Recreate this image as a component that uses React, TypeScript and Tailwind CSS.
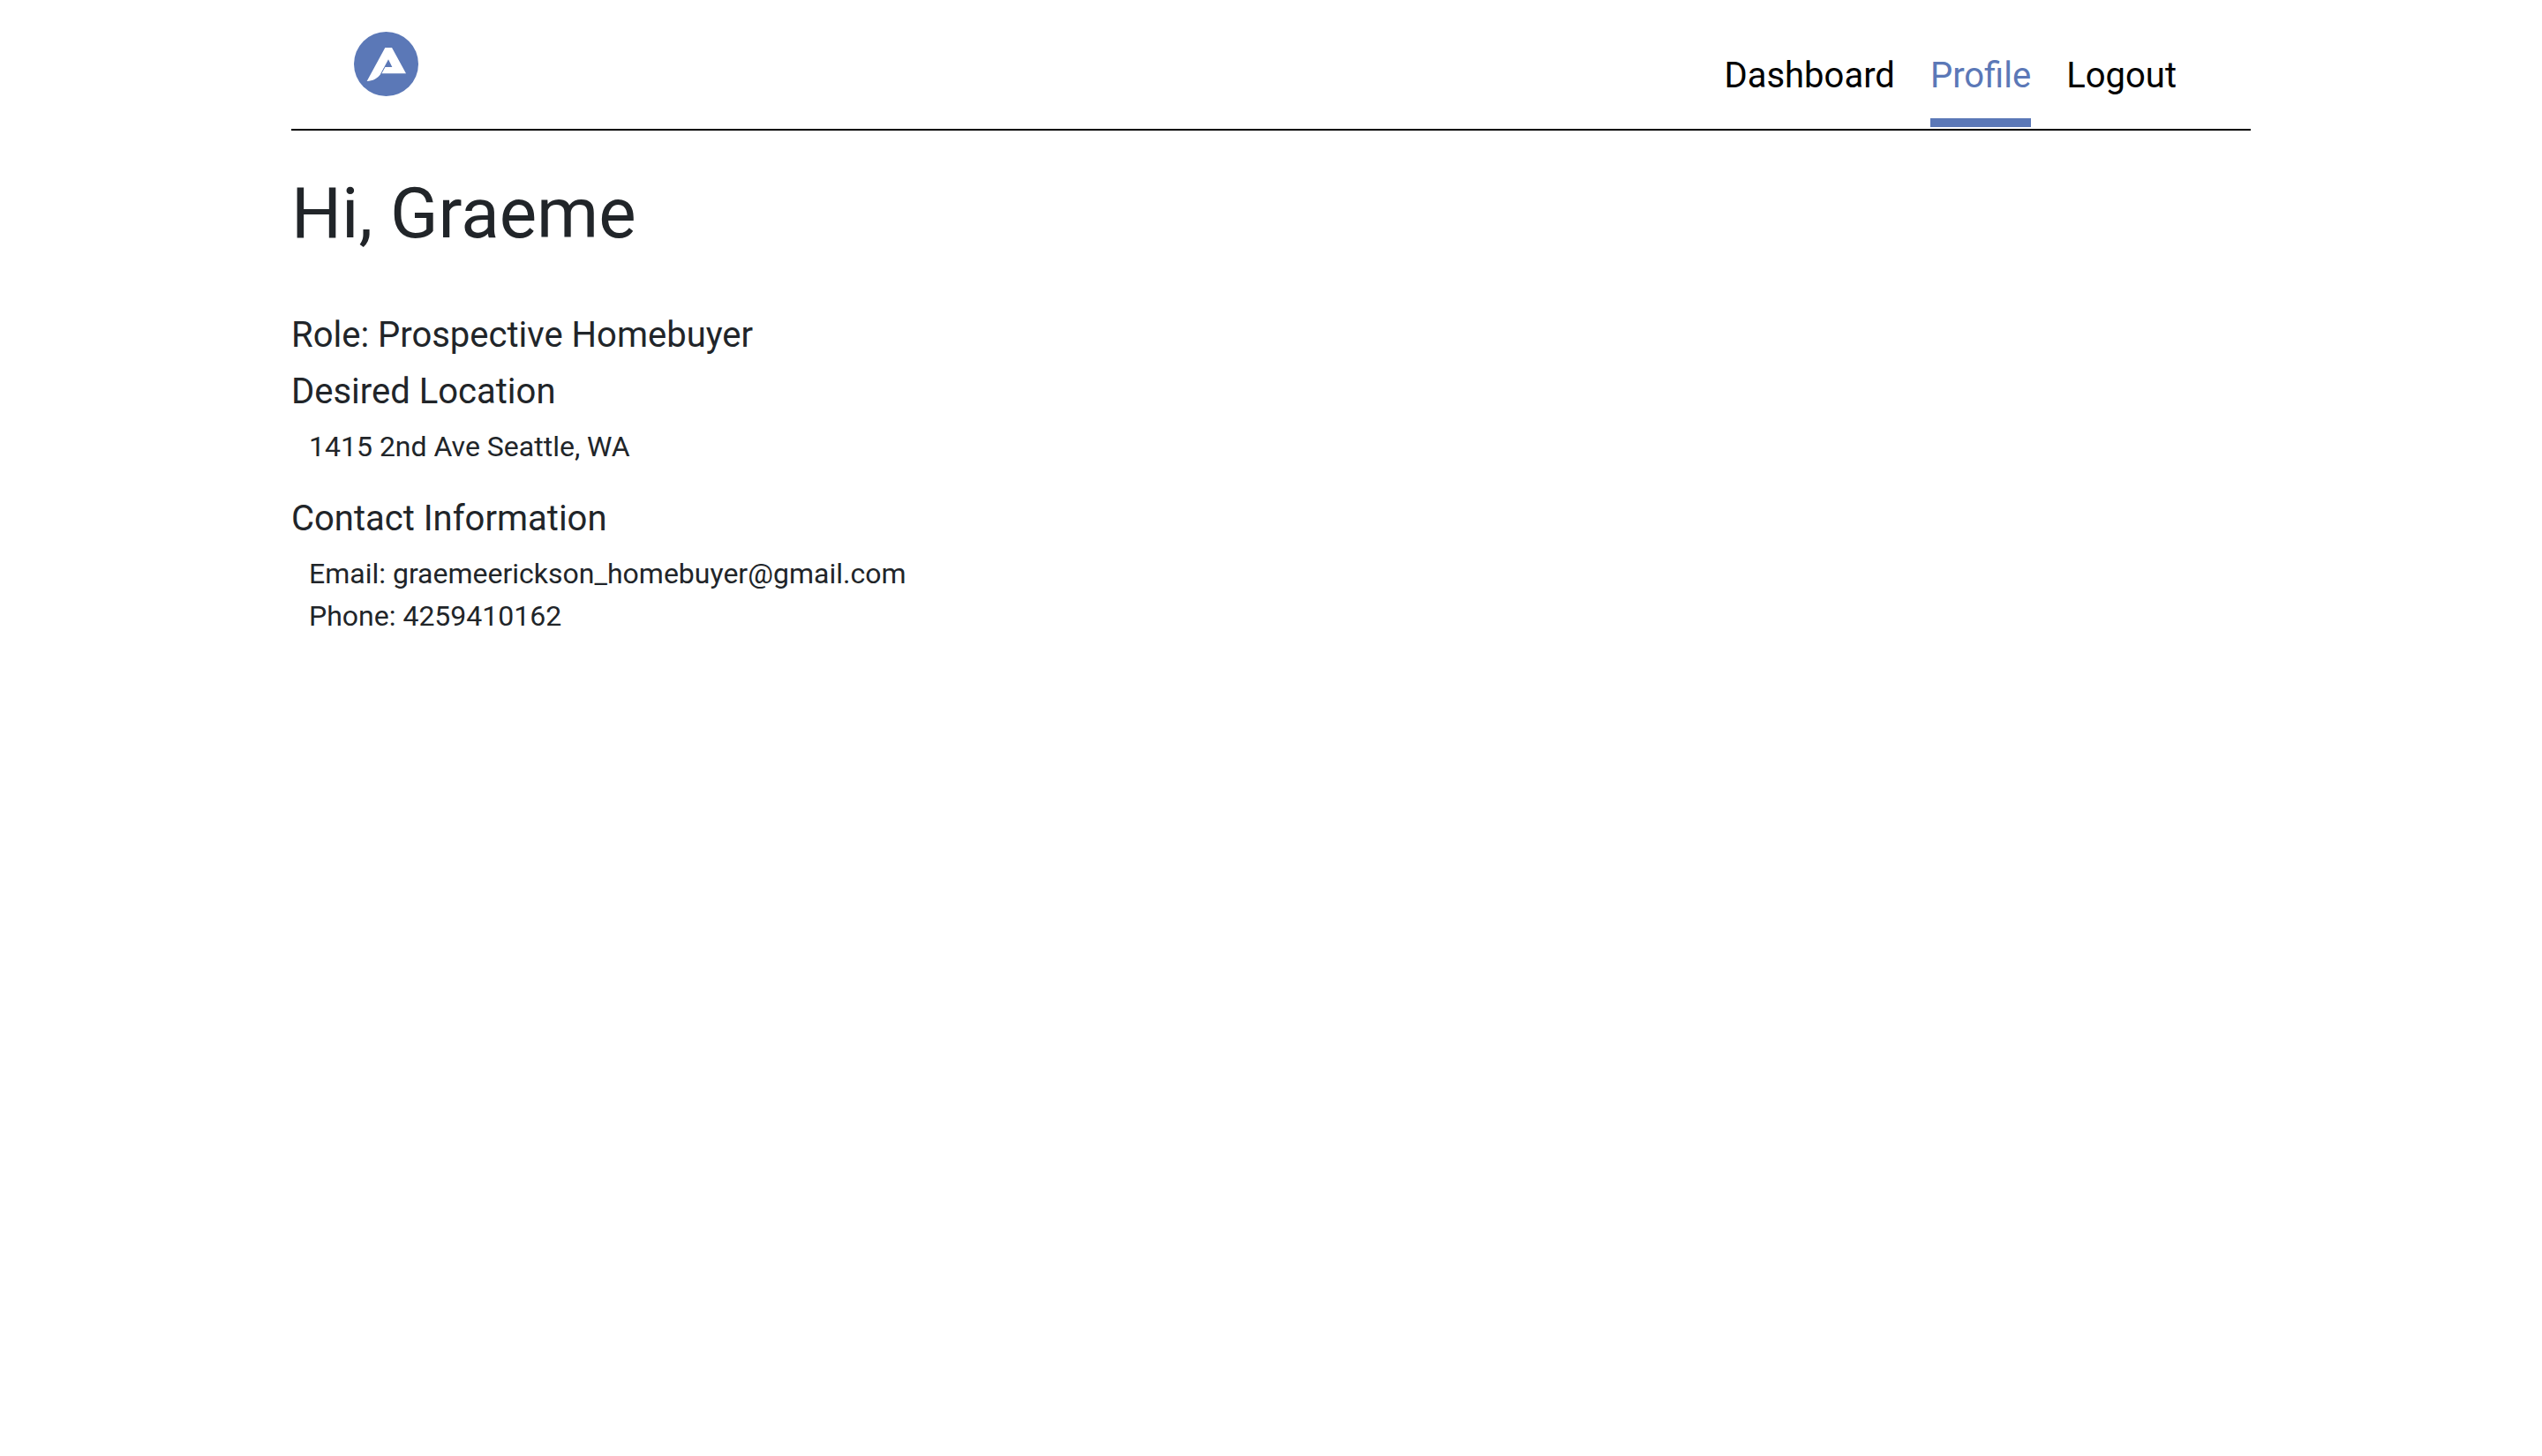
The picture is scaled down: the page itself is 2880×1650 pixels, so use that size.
const navLinks = [
  { label: "Dashboard", active: false },
  { label: "Profile", active: true },
  { label: "Logout", active: false },
];

function Logo() {
  return (
    <svg viewBox="0 0 219 219" className="size-[73px]" role="img" aria-label="Home">
      <circle cx="109.5" cy="109.5" r="109.5" fill="#5b78b7" />
      <path
        fill="#fff"
        d="M106 54H129L177 142H94L105.500 120H130L117 94L90 145C81 158 64 168 44 168Z"
      />
      <path d="M105 120L92 143" stroke="#5b78b7" strokeWidth="2" />
    </svg>
  );
}

function Header() {
  return (
    <header className="flex items-start justify-between border-b-2 border-black pb-0.5 pl-[71px] pr-[84px]">
      <a href="#home" className="mt-9">
        <Logo />
      </a>
      <nav className="mt-14 flex gap-10">
        {navLinks.map(({ label, active }) => (
          <a
            key={label}
            href={"#" + label.toLowerCase()}
            aria-current={active ? "page" : undefined}
            className={
              active
                ? "border-b-10 border-[#5b78b7] pb-[18px] text-[40px] leading-[60px] text-[#5b78b7]"
                : "border-b-10 border-transparent pb-[18px] text-[40px] leading-[60px] text-black"
            }
          >
            {label}
          </a>
        ))}
      </nav>
    </header>
  );
}

export default function App() {
  return (
    <div className="min-h-screen bg-white font-['Roboto',sans-serif] text-[32px] leading-[48px] text-[#212529]">
      <div className="mx-auto max-w-[2280px] px-[30px]">
        <Header />
        <main className="pt-[46px]">
          <h1 className="mb-[66px] text-[80px] leading-[96px]">Hi, Graeme</h1>
          <h2 className="mb-4 text-[40px] leading-[48px]">Role: Prospective Homebuyer</h2>
          <h2 className="mb-[14px] text-[40px] leading-[48px]">Desired Location</h2>
          <p className="mb-[34px] pl-5">1415 2nd Ave Seattle, WA</p>
          <h2 className="mb-[14px] text-[40px] leading-[48px]">Contact Information</h2>
          <p className="pl-5">Email: graemeerickson_homebuyer@gmail.com</p>
          <p className="pl-5">Phone: 4259410162</p>
        </main>
      </div>
    </div>
  );
}
